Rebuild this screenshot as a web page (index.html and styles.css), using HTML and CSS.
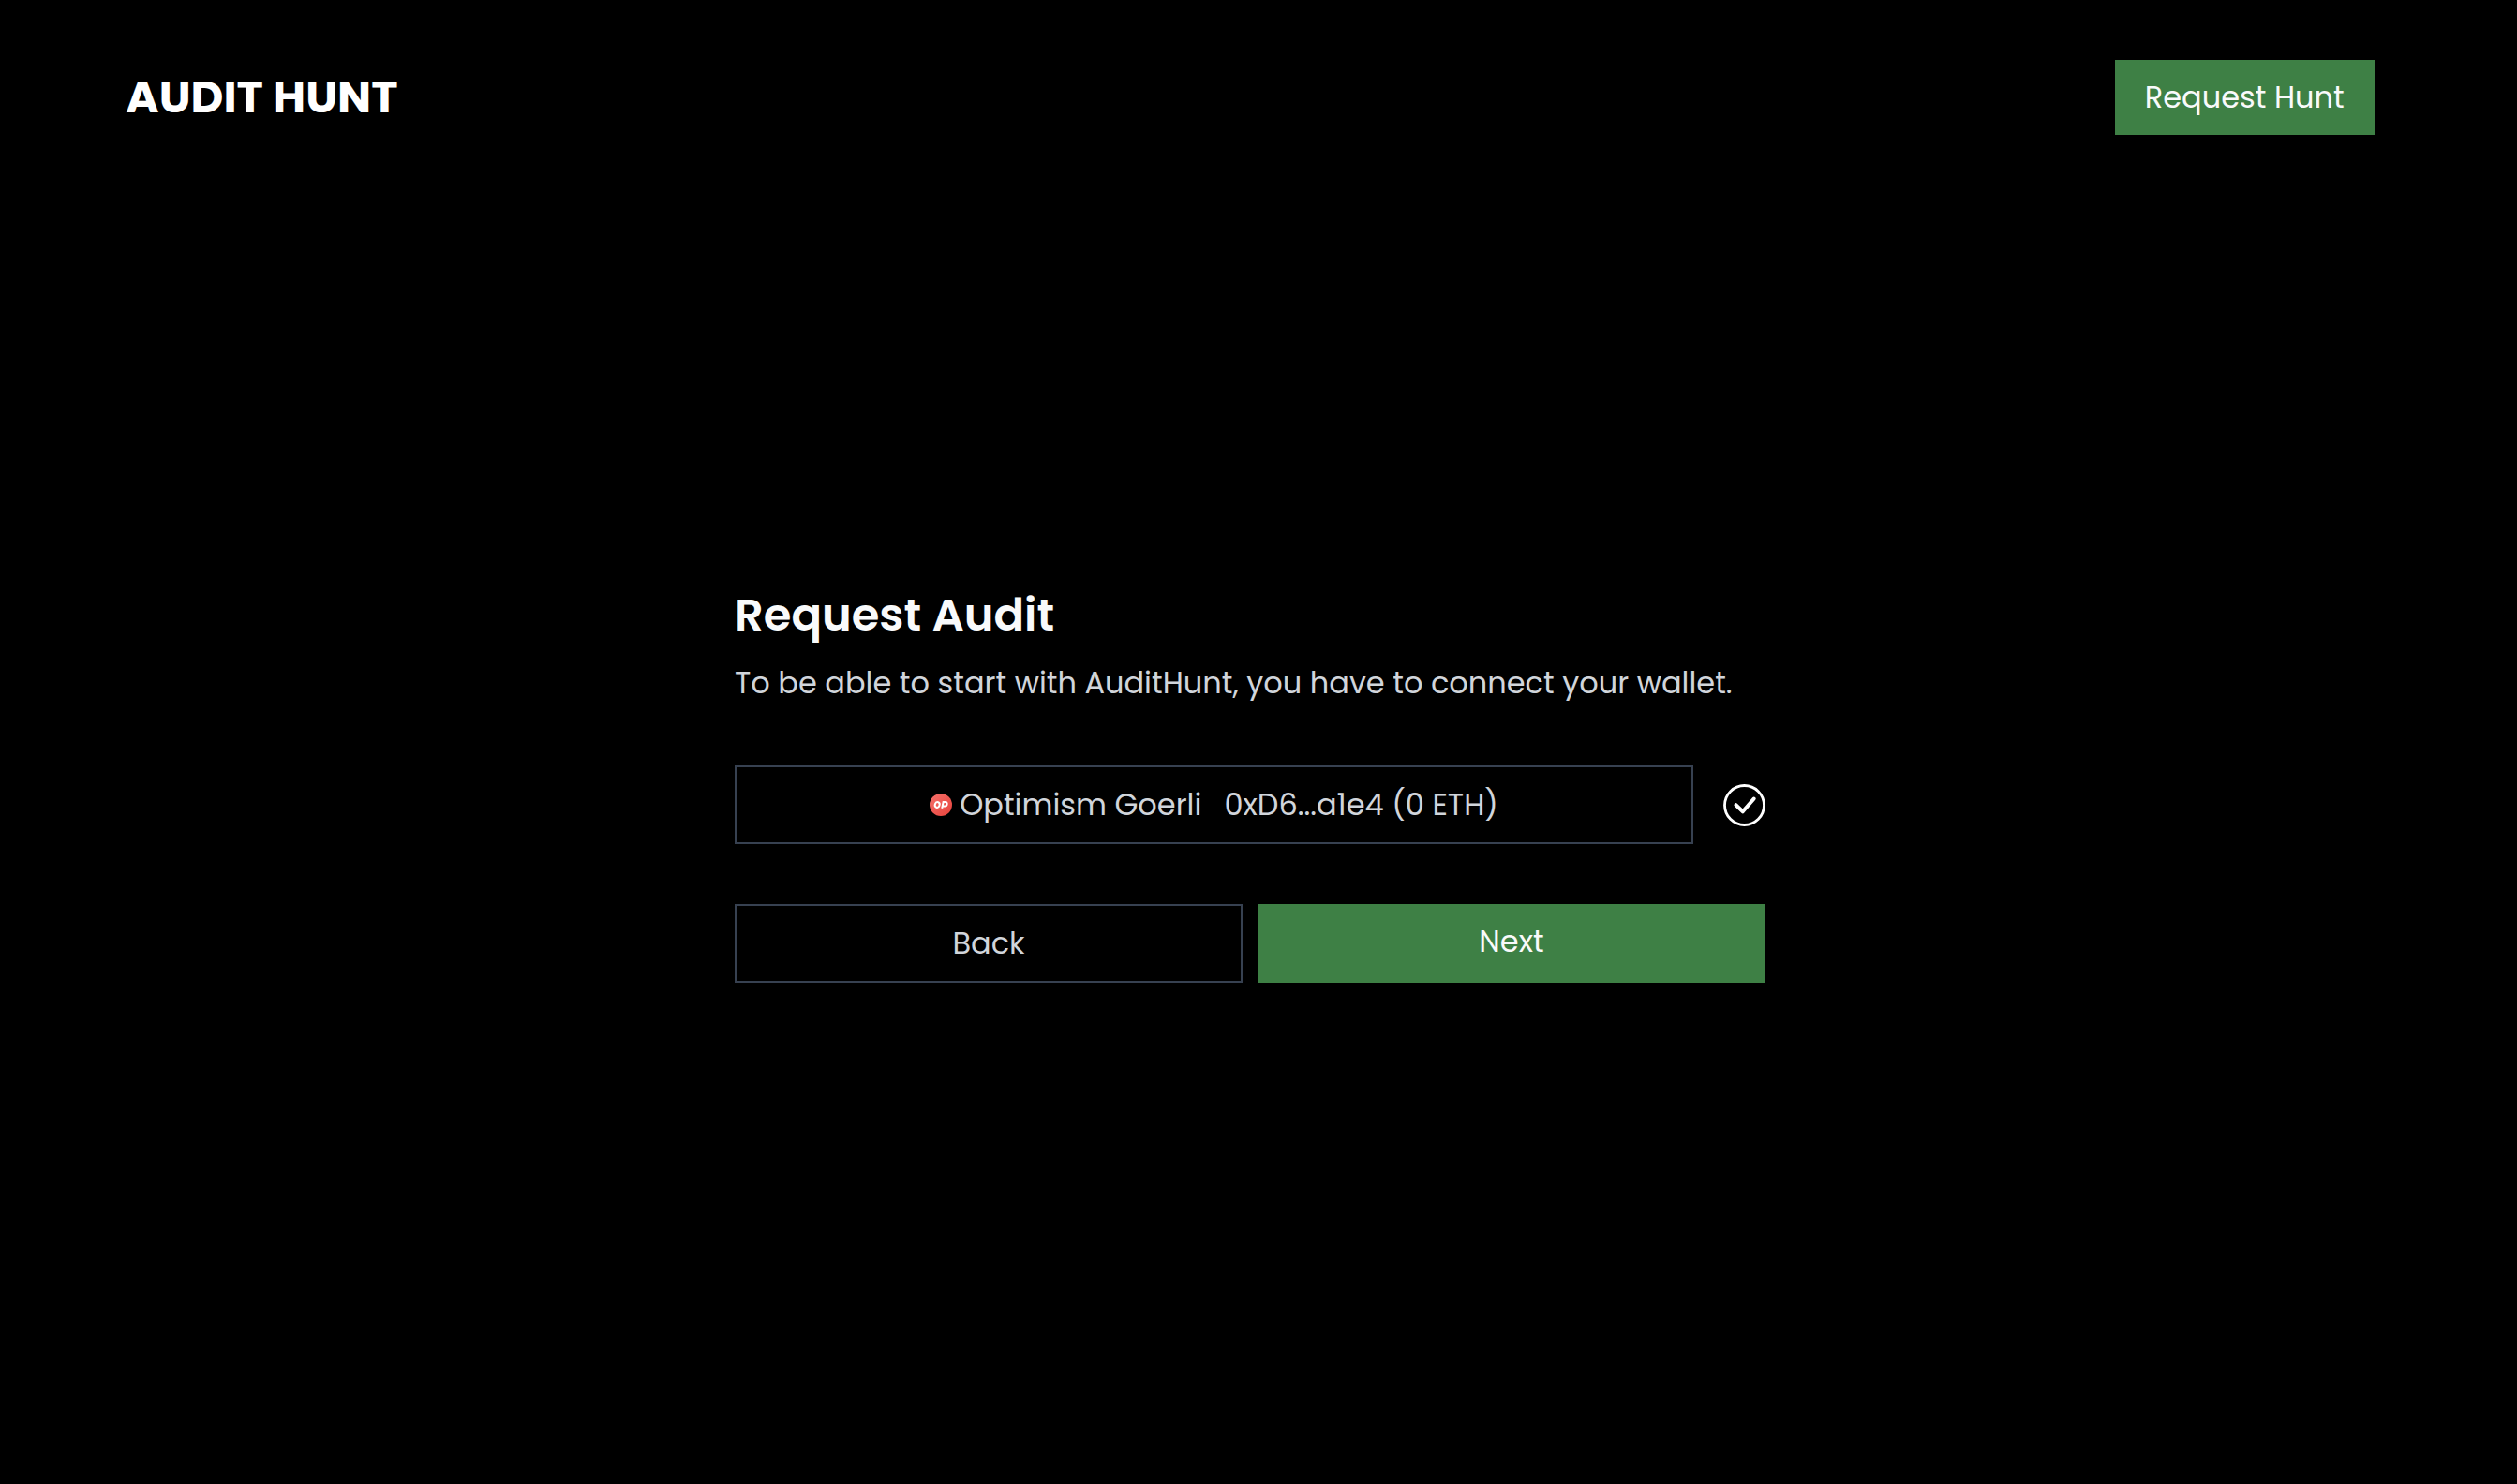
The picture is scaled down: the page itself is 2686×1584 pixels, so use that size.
FILE: index.html
```html
<!DOCTYPE html>
<html lang="en">
<head>
<meta charset="utf-8">
<meta name="viewport" content="width=device-width, initial-scale=1">
<title>Audit Hunt</title>
<link rel="stylesheet" href="styles.css">
</head>
<body class="page">
<header class="header">
  <a class="logo" href="#">AUDIT HUNT</a>
  <button class="button button-primary button-compact" type="button">Request Hunt</button>
</header>
<main class="main">
  <section class="panel">
    <h1 class="title">Request Audit</h1>
    <p class="lead">To be able to start with AuditHunt, you have to connect your wallet.</p>
    <div class="wallet-row">
      <button class="button button-outline wallet" type="button">
        <span class="network">
          <svg class="network-icon" viewBox="0 0 24 24" aria-hidden="true">
            <defs>
              <linearGradient id="op" x1="0" y1="0" x2="1" y2="1">
                <stop offset="0" stop-color="#f5716b"/>
                <stop offset="1" stop-color="#e8423b"/>
              </linearGradient>
            </defs>
            <circle cx="12" cy="12" r="12" fill="url(#op)"/>
            <g fill="none" stroke="#fff" stroke-width="2">
              <ellipse cx="8.2" cy="12" rx="2.4" ry="2.9" transform="rotate(20 8.2 12)"/>
              <path d="M13.2 15.8 14.6 9.1H17C19.6 9.1 19 13.4 16.4 13.4H13.8"/>
            </g>
          </svg>
          Optimism Goerli
        </span>
        <span>0xD6...a1e4 (0 ETH)</span>
      </button>
      <svg class="check" viewBox="0 0 45 45" role="img" aria-label="Connected">
        <g fill="none" stroke="#fff" stroke-linecap="round" stroke-linejoin="round">
          <circle cx="22.5" cy="22.5" r="21" stroke-width="2.8"/>
          <path d="M13.5 22.2 20.8 29.3 32.7 15.5" stroke-width="4"/>
        </g>
      </svg>
    </div>
    <div class="actions">
      <button class="button button-outline" type="button">Back</button>
      <button class="button button-primary" type="button">Next</button>
    </div>
  </section>
</main>
</body>
</html>
```
FILE: styles.css
```css
* {
  box-sizing: border-box;
}

.page {
  display: flex;
  flex-direction: column;
  min-height: 100vh;
  margin: 0;
  padding-right: 18px;
  background: #000;
  color: #d1d5db;
  font-family: Poppins, Inter, sans-serif;
  font-size: 32px;
  line-height: 48px;
}

.header {
  display: flex;
  align-items: center;
  justify-content: space-between;
  padding: 64px 5vw;
}

.logo {
  color: #fff;
  font-size: 48px;
  font-weight: 700;
  text-decoration: none;
}

.main {
  display: flex;
  flex: 1;
  align-items: center;
  justify-content: center;
  padding: 0 32px 118px;
}

.panel {
  width: 100%;
  max-width: 1100px;
}

.title {
  margin: 0 0 16px;
  color: #f9fafb;
  font-size: 48px;
  font-weight: 600;
  line-height: 64px;
}

.lead {
  margin: 0 0 64px;
}

.button {
  padding: 16px 32px;
  border: 0;
  background: transparent;
  color: inherit;
  font: inherit;
  cursor: pointer;
}

.button-primary {
  padding-bottom: 20px;
  background: #3e8045;
  color: #f9fafb;
}

.button-compact {
  padding-bottom: 16px;
}

.button-outline {
  border: 2px solid #374151;
}

.wallet-row {
  display: flex;
  align-items: center;
  gap: 32px;
  margin-bottom: 64px;
}

.wallet {
  display: flex;
  flex: 1;
  align-items: center;
  justify-content: center;
  gap: 24px;
}

.network {
  display: flex;
  align-items: center;
  gap: 8px;
}

.network-icon {
  width: 24px;
  height: 24px;
}

.check {
  width: 45px;
  height: 45px;
}

.actions {
  display: grid;
  grid-template-columns: 1fr 1fr;
  gap: 16px;
}
```
